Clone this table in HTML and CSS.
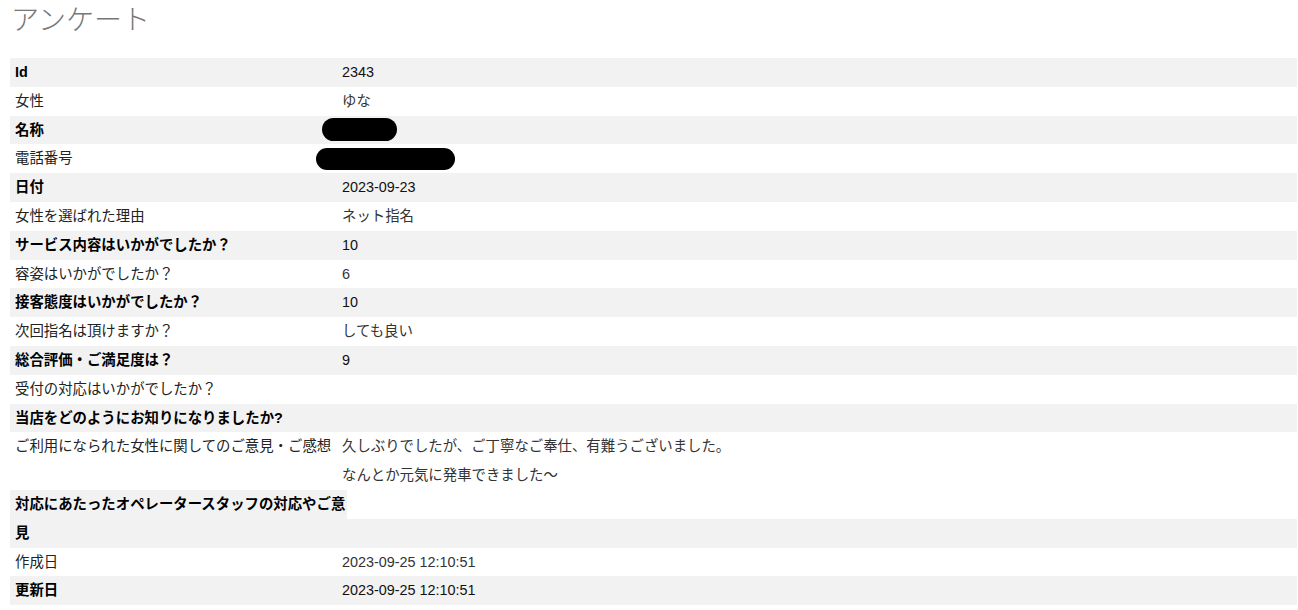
FILE: index.html
```html
<!DOCTYPE html>
<html lang="ja">
<head>
    <meta charset="UTF-8">
    <meta name="viewport" content="width=device-width, initial-scale=1.0">
    <title>アンケート</title>
    <link rel="stylesheet" href="styles.css">
</head>
<body>
    <h1>アンケート</h1>

    <!-- 回答の詳細 -->
    <div class="detail">
        <div class="row odd">
            <div class="label">Id</div>
            <div class="value">2343</div>
        </div>
        <div class="row">
            <div class="label">女性</div>
            <div class="value">ゆな</div>
        </div>
        <div class="row odd">
            <div class="label">名称</div>
            <div class="value"><span class="masked name"></span></div>
        </div>
        <div class="row">
            <div class="label">電話番号</div>
            <div class="value"><span class="masked tel"></span></div>
        </div>
        <div class="row odd">
            <div class="label">日付</div>
            <div class="value">2023-09-23</div>
        </div>
        <div class="row">
            <div class="label">女性を選ばれた理由</div>
            <div class="value">ネット指名</div>
        </div>
        <div class="row odd">
            <div class="label">サービス内容はいかがでしたか？</div>
            <div class="value">10</div>
        </div>
        <div class="row">
            <div class="label">容姿はいかがでしたか？</div>
            <div class="value">6</div>
        </div>
        <div class="row odd">
            <div class="label">接客態度はいかがでしたか？</div>
            <div class="value">10</div>
        </div>
        <div class="row">
            <div class="label">次回指名は頂けますか？</div>
            <div class="value">しても良い</div>
        </div>
        <div class="row odd">
            <div class="label">総合評価・ご満足度は？</div>
            <div class="value">9</div>
        </div>
        <div class="row">
            <div class="label">受付の対応はいかがでしたか？</div>
            <div class="value"></div>
        </div>
        <div class="row odd">
            <div class="label">当店をどのようにお知りになりましたか?</div>
            <div class="value"></div>
        </div>
        <div class="row">
            <div class="label">ご利用になられた女性に関してのご意見・ご感想</div>
            <div class="value">久しぶりでしたが、ご丁寧なご奉仕、有難うございました。<br>なんとか元気に発車できました〜</div>
        </div>
        <div class="row odd split">
            <div class="label">対応にあたったオペレータースタッフの対応やご意見</div>
            <div class="value"></div>
        </div>
        <div class="row">
            <div class="label">作成日</div>
            <div class="value">2023-09-25 12:10:51</div>
        </div>
        <div class="row odd">
            <div class="label">更新日</div>
            <div class="value">2023-09-25 12:10:51</div>
        </div>
    </div>
</body>
</html>
```

FILE: styles.css
```css
body {
    font-family: "Liberation Sans", "Noto Sans CJK JP", sans-serif;
    margin: 0;
    padding: 0 1px 0 10px;
    background-color: #fff;
    color: #333;
}

h1 {
    font-size: 28px;
    font-weight: 300;
    line-height: 42px;
    color: #777;
    margin: 0 0 16px 1px;
}

.detail {
    font-size: 14.4px;
    line-height: 28.8px;
}

.row {
    display: flex;
}

.row .label {
    flex: 0 0 332px;
    box-sizing: border-box;
    padding-left: 5px;
    color: #222;
}

.row .value {
    flex: 1;
    display: flex;
    flex-direction: column;
    justify-content: center;
}

.row.odd .label,
.row.odd .value {
    background-color: #f2f2f2;
}

.row.odd .label {
    font-weight: bold;
    color: #000;
}

.row.odd .value {
    color: #111;
}

/* ラベルが2行になる行: 値は2行目だけ */
.row.split {
    background-color: #fff;
}

.row.split .label {
    flex-basis: 337px;
}

.row.split .value {
    align-self: flex-end;
    height: 28.8px;
}

.masked {
    display: block;
    background-color: #000;
}

.masked.name {
    width: 75px;
    height: 23px;
    border-radius: 12px;
    margin-left: -20px;
}

.masked.tel {
    width: 139px;
    height: 22px;
    border-radius: 11px;
    margin-left: -26px;
}
```
